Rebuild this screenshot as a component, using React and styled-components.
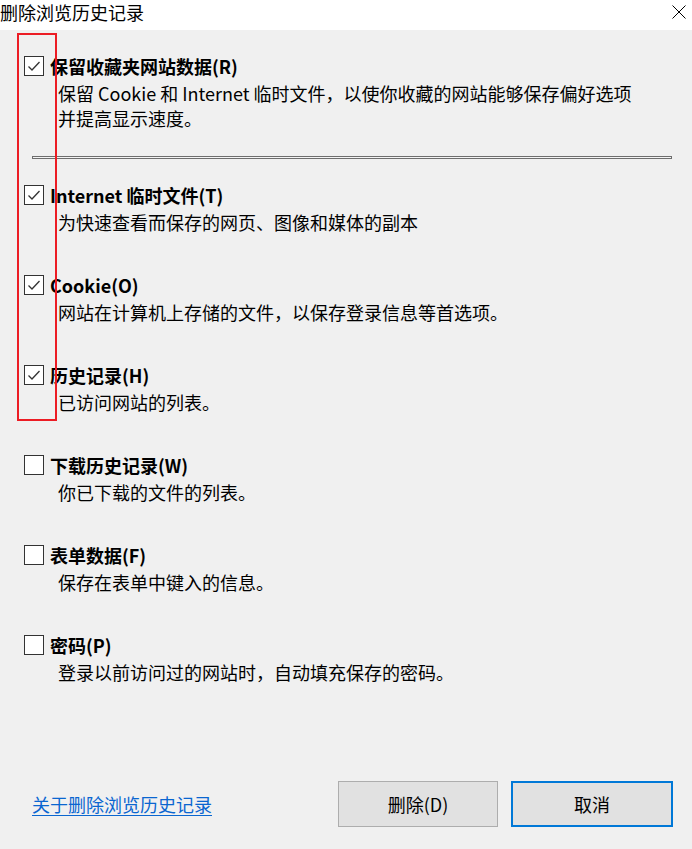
import React from "react";
import styled, { createGlobalStyle } from "styled-components";

const GlobalStyle = createGlobalStyle`
    html, body {
        margin: 0;
        padding: 0;
        background: #f0f0f0;
    }
    body {
        font-family: "Noto Sans CJK SC", "Noto Sans", "Liberation Sans", sans-serif;
        color: #000;
    }
`;

const Window = styled.div`
    width: 692px;
    height: 849px;
    display: flex;
    flex-direction: column;
    background: #f0f0f0;
    overflow: hidden;
`;

const TitleBar = styled.div`
    height: 30px;
    flex: none;
    display: flex;
    align-items: center;
    justify-content: space-between;
    background: #fff;
    padding: 0 6px 0 0;
`;

const Title = styled.div`
    font-size: 18px;
    line-height: 24px;
    margin-top: -6px;
`;

const CloseButton = styled.div`
    width: 14px;
    height: 14px;
    margin-top: -6px;
    display: flex;
`;

const Body = styled.div`
    position: relative;
    padding: 26px 0 0 24px;
`;

const Highlight = styled.div`
    position: absolute;
    left: 17px;
    top: 3px;
    width: 36px;
    height: 384px;
    border: 2px solid #ec1c24;
    pointer-events: none;
`;

const Option = styled.div`
    display: flex;
    flex-direction: column;
    margin-bottom: ${props => props.gap}px;
`;

const OptionHead = styled.div`
    display: flex;
    align-items: center;
    gap: 6px;
    height: 20px;
`;

const Box = styled.div`
    width: 18px;
    height: 18px;
    border: 1px solid #333;
    background: #fff;
    display: flex;
    align-items: center;
    justify-content: center;
    flex: none;
`;

const Label = styled.div`
    font-size: 18px;
    font-weight: 700;
    line-height: 20px;
    white-space: nowrap;
`;

const Desc = styled.div`
    font-size: 18px;
    line-height: 25px;
    margin: 5px 0 0 34px;
    white-space: pre-line;
`;

const Separator = styled.div`
    height: 1px;
    margin: 0 20px 26px 8px;
    border: 1px solid #6e6e6e;
    background: #f4f4f4;
`;

const Footer = styled.div`
    display: flex;
    align-items: center;
    height: 46px;
    margin-top: 96px;
    padding: 0 19px 0 32px;
`;

const HelpLink = styled.a`
    font-size: 18px;
    color: #0a66d0;
    text-decoration: underline;
    text-underline-offset: 3px;
    cursor: pointer;
    margin-right: auto;
`;

const Button = styled.button`
    width: ${props => (props.primary ? 162 : 160)}px;
    height: 46px;
    margin-left: ${props => (props.primary ? 13 : 0)}px;
    background: #e1e1e1;
    border: ${props => (props.primary ? "2px solid #0078d7" : "1px solid #adadad")};
    font-family: inherit;
    font-size: 18px;
    color: #000;
    padding: 0;
`;

const options = [
    {
        label: "保留收藏夹网站数据(R)",
        desc: "保留 Cookie 和 Internet 临时文件，以使你收藏的网站能够保存偏好选项\n并提高显示速度。",
        checked: true,
        gap: 25,
    },
    { label: "Internet 临时文件(T)", desc: "为快速查看而保存的网页、图像和媒体的副本", checked: true, gap: 40 },
    { label: "Cookie(O)", desc: "网站在计算机上存储的文件，以保存登录信息等首选项。", checked: true, gap: 40 },
    { label: "历史记录(H)", desc: "已访问网站的列表。", checked: true, gap: 40 },
    { label: "下载历史记录(W)", desc: "你已下载的文件的列表。", checked: false, gap: 40 },
    { label: "表单数据(F)", desc: "保存在表单中键入的信息。", checked: false, gap: 40 },
    { label: "密码(P)", desc: "登录以前访问过的网站时，自动填充保存的密码。", checked: false, gap: 0 },
];

const CheckBox = ({ checked }) => (
    <Box>
        {checked && (
            <svg width="18" height="18" viewBox="0 0 18 18">
                <polyline points="3.5,9.5 7,13 14.5,5" fill="none" stroke="#333" strokeWidth="1.3" />
            </svg>
        )}
    </Box>
);

const App = () => (
    <Window>
        <GlobalStyle />
        <TitleBar>
            <Title>删除浏览历史记录</Title>
            <CloseButton>
                <svg width="14" height="14" viewBox="0 0 14 14">
                    <path d="M0.5 0.5 L13.5 13.5 M13.5 0.5 L0.5 13.5" stroke="#000" strokeWidth="1" fill="none" />
                </svg>
            </CloseButton>
        </TitleBar>
        <Body>
            <Highlight />
            {options.map((opt, i) => (
                <React.Fragment key={opt.label}>
                    <Option gap={opt.gap}>
                        <OptionHead>
                            <CheckBox checked={opt.checked} />
                            <Label>{opt.label}</Label>
                        </OptionHead>
                        <Desc>{opt.desc}</Desc>
                    </Option>
                    {i === 0 && <Separator />}
                </React.Fragment>
            ))}
        </Body>
        <Footer>
            <HelpLink>关于删除浏览历史记录</HelpLink>
            <Button>删除(D)</Button>
            <Button primary>取消</Button>
        </Footer>
    </Window>
);

export default App;
